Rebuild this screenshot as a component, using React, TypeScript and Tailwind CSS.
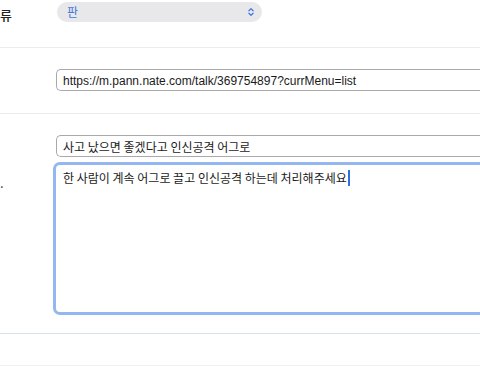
import { ChevronsUpDown } from 'lucide-react'

const kr = { fontFamily: '"Noto Sans CJK KR", "Liberation Sans", sans-serif' }

function Field({ children }: { children: React.ReactNode }) {
  return (
    <div className="flex h-[22px] items-center rounded-l-[5px] border border-r-0 border-[#a9a9a9] bg-white pl-[6px] pt-[1px] text-[12px] text-[#1a1a1a]">
      {children}
    </div>
  )
}

export default function App() {
  return (
    <div className="h-[370px] w-[480px] overflow-hidden bg-white" style={kr}>
      <div className="flex h-[48px] border-b border-[#ececec] pt-[2px]">
        <div className="w-[57px] pt-[3px] text-[13px] font-medium text-[#222]">류</div>
        <div className="flex h-[20px] w-[205px] items-center justify-between rounded-full bg-[#e8e8eb] pl-[10px] pr-[6px]">
          <span className="text-[12px] text-[#3f78d8]">판</span>
          <ChevronsUpDown className="h-[10px] w-[10px] text-[#3f78d8]" strokeWidth={3} />
        </div>
      </div>

      <div className="flex h-[66px] border-b border-[#ececec] pt-[21px]">
        <div className="w-[56px]" />
        <div className="flex-1">
          <Field>
            <span style={{ fontFamily: '"Liberation Sans", sans-serif' }}>
              https://m.pann.nate.com/talk/369754897?currMenu=list
            </span>
          </Field>
        </div>
      </div>

      <div className="flex h-[220px] border-b border-[#d3e3f0] pt-[21px]">
        <div className="w-[56px] pt-[41px] text-[13px] leading-none text-[#333]">.</div>
        <div className="flex flex-1 flex-col gap-[5px]">
          <Field>사고 났으면 좋겠다고 인신공격 어그로</Field>
          <div className="-ml-[3px] h-[153px] rounded-l-[7px] border-[3px] border-r-0 border-[#93b7ee] bg-white pl-[7px] pt-[2px] text-[12px] leading-[18px] text-[#1a1a1a]">
            한 사람이 계속 어그로 끌고 인신공격 하는데 처리해주세요
            <span className="ml-[1px] inline-block h-[16px] w-[2px] translate-y-[3px] bg-[#2f6fe0]" />
          </div>
        </div>
      </div>

      <div className="h-[32px] border-b border-[#f0f0f0]" />
    </div>
  )
}
